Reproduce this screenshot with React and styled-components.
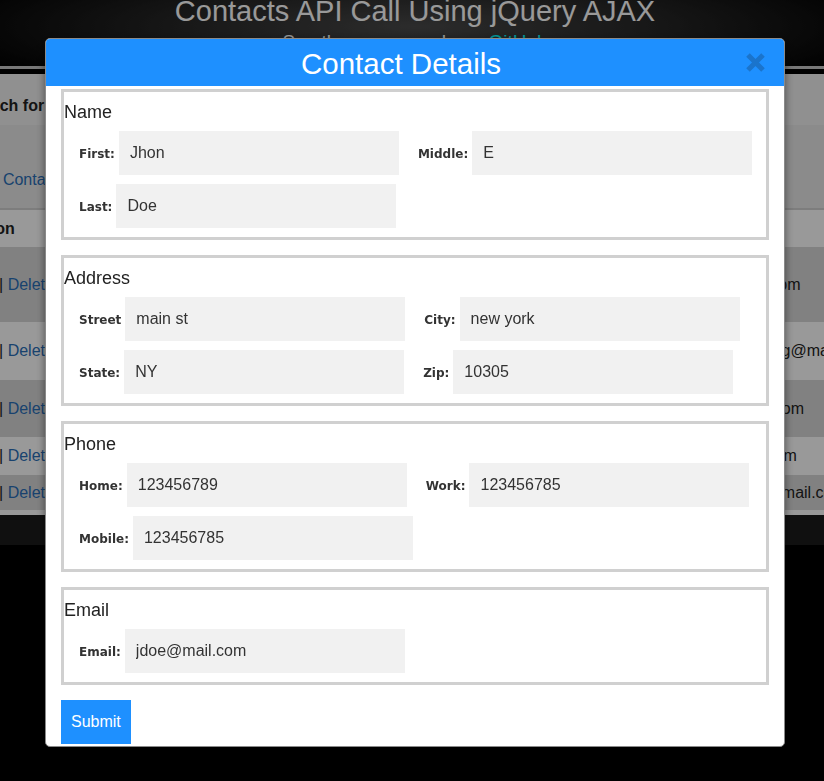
import React from 'react';
import styled, { createGlobalStyle } from 'styled-components';

const Global = createGlobalStyle`
  html, body { margin: 0; padding: 0; background: #000; overflow: hidden; }
  body { font-family: "Liberation Sans", Arial, sans-serif; }
  * { box-sizing: border-box; }
`;

/* ---------- background page ---------- */
const Page = styled.div`
  width: 830px;
  height: 781px;
  background: #000;
  overflow: hidden;
`;

const SiteHeader = styled.header`
  height: 66px;
  background: radial-gradient(ellipse 60% 120% at 50% 40%, #4a4a4a 0%, #1e1e1e 60%, #000 100%);
  text-align: center;
  color: #fff;
  overflow: hidden;
`;

const SiteTitle = styled.h1`
  margin: 0;
  font-size: 29px;
  font-weight: normal;
  line-height: 30px;
  margin-top: -4px;
`;

const SiteSub = styled.p`
  margin: 5px 0 0;
  font-size: 19px;
  line-height: 22px;
  a { color: #00ffff; text-decoration: none; }
`;

const Stripe = styled.div`
  height: 3px;
  background: #c8c8c8;
  margin-bottom: 5px;
`;

const Main = styled.main`
  width: 1000px;
  margin-left: -85px;
  background: #f0f0f0;
`;

const SearchBar = styled.div`
  height: 51px;
  padding: 23px 0 0 50px;
  font-weight: bold;
  font-size: 16px;
  color: #222;
`;

const Toolbar = styled.div`
  height: 85px;
  background: #e8e8e8;
  padding: 46px 0 0 55px;
  font-size: 16px;
  a { color: #2a6fb8; text-decoration: none; }
  border-bottom: 2px solid #d0d0d0;
`;

const Table = styled.div`
  display: flex;
  flex-direction: column;
`;

const Row = styled.div`
  display: flex;
  align-items: center;
  height: ${(p) => p.$h}px;
  background: ${(p) => (p.$dark ? '#d8d8d8' : '#ffffff')};
  font-size: 16px;
  color: #222;
  font-weight: ${(p) => (p.$head ? 'bold' : 'normal')};
`;

const ActionCell = styled.div`
  width: 775px;
  padding-left: 52px;
  white-space: nowrap;
  a { color: #2a6fb8; text-decoration: none; }
`;

const HeadCell = styled(ActionCell)`
  padding-left: 50px;
`;

const EmailCell = styled.div`
  white-space: nowrap;
`;

const Tail = styled.div`
  height: 5px;
  background: #ffffff;
`;

const SiteFooter = styled.footer`
  height: 30px;
  background: #1c1c1c;
`;

const Dim = styled.div`
  position: fixed;
  inset: 0;
  background: rgba(0, 0, 0, 0.4);
`;

/* ---------- modal ---------- */
const Modal = styled.div`
  position: fixed;
  left: 45px;
  top: 38px;
  width: 740px;
  background: #fff;
  border: 1px solid #8a8a8a;
  border-radius: 5px;
  box-shadow: 0 3px 9px rgba(0, 0, 0, 0.5);
  overflow: hidden;
`;

const ModalHeader = styled.div`
  display: flex;
  align-items: center;
  height: 47px;
  padding: 0 15px;
  background: #1e90ff;
  color: #fff;
`;

const ModalTitle = styled.h2`
  flex: 1;
  margin: 0;
  padding-top: 2px;
  text-align: center;
  font-size: 29.5px;
  font-weight: normal;
  line-height: 45px;
`;

const Close = styled.button`
  width: 28px;
  height: 28px;
  padding: 0;
  border: 0;
  background: none;
  display: flex;
  align-items: center;
  justify-content: center;
  cursor: pointer;
`;

const ModalBody = styled.form`
  padding: 3px 15px 2px;
`;

const Group = styled.fieldset`
  margin: 0 0 15px;
  padding: 0 0 9px;
  border: 3px solid #d0d0d0;
  min-width: 0;
`;

const GroupTitle = styled.h3`
  margin: 10px 0 8px;
  font-size: 18px;
  font-weight: normal;
  line-height: 21px;
  color: #222;
`;

const Fields = styled.div`
  display: flex;
  flex-wrap: wrap;
  row-gap: 9px;
`;

const Field = styled.label`
  display: flex;
  align-items: center;
  gap: 4px;
  margin-left: 15px;
  margin-right: 4px;
`;

const FieldLabel = styled.span`
  font-family: "DejaVu Sans", Verdana, sans-serif;
  font-weight: bold;
  font-size: 12px;
  color: #333;
  padding-top: 2px;
`;

const Input = styled.input`
  width: 280px;
  height: 44px;
  padding: 0 11px;
  border: 0;
  outline: none;
  background: #f1f1f1;
  font-family: "Liberation Sans", Arial, sans-serif;
  font-size: 16px;
  color: #333;
`;

const Submit = styled.button`
  height: 44px;
  padding: 0 10px;
  border: 0;
  background: #1e90ff;
  color: #fff;
  font-family: "Liberation Sans", Arial, sans-serif;
  font-size: 16px;
  cursor: pointer;
`;

const groups = [
  {
    title: 'Name',
    fields: [
      ['First:', 'Jhon'],
      ['Middle:', 'E'],
      ['Last:', 'Doe'],
    ],
  },
  {
    title: 'Address',
    fields: [
      ['Street', 'main st'],
      ['City:', 'new york'],
      ['State:', 'NY'],
      ['Zip:', '10305'],
    ],
  },
  {
    title: 'Phone',
    fields: [
      ['Home:', '123456789'],
      ['Work:', '123456785'],
      ['Mobile:', '123456785'],
    ],
  },
  {
    title: 'Email',
    fields: [['Email:', 'jdoe@mail.com']],
  },
];

const rows = [
  { h: 75, dark: true, email: 'jdoe@mail.com' },
  { h: 58, dark: false, email: 'thomas.young@mail.com' },
  { h: 57, dark: true, email: 'mike@mail.com' },
  { h: 38, dark: false, email: 'bob@mail.com' },
  { h: 35, dark: true, email: 'alice.smith@mail.com' },
];

export default function App() {
  return (
    <>
      <Global />
      <Page>
        <SiteHeader>
          <SiteTitle>Contacts API Call Using jQuery AJAX</SiteTitle>
          <SiteSub>
            See the source code on <a href="#">GitHub</a>
          </SiteSub>
        </SiteHeader>
        <Stripe />
        <Main>
          <SearchBar>Search for contact:</SearchBar>
          <Toolbar>
            <a href="#">Add Contact</a>
          </Toolbar>
          <Table>
            <Row $h={37} $head>
              <HeadCell>Action</HeadCell>
              <EmailCell>Email</EmailCell>
            </Row>
            {rows.map((r, i) => (
              <Row key={i} $h={r.h} $dark={r.dark}>
                <ActionCell>
                  <a href="#">Edit</a> | <a href="#">Delete</a>
                </ActionCell>
                <EmailCell>{r.email}</EmailCell>
              </Row>
            ))}
          </Table>
          <Tail />
        </Main>
        <SiteFooter />
      </Page>
      <Dim />
      <Modal>
        <ModalHeader>
          <ModalTitle>Contact Details</ModalTitle>
          <Close type="button" aria-label="Close">
            <svg width="21" height="21" viewBox="0 0 21 21">
              <path d="M3 3 L18 18 M18 3 L3 18" stroke="#1a74cc" strokeWidth="5" />
            </svg>
          </Close>
        </ModalHeader>
        <ModalBody onSubmit={(e) => e.preventDefault()}>
          {groups.map((g) => (
            <Group key={g.title}>
              <GroupTitle>{g.title}</GroupTitle>
              <Fields>
                {g.fields.map(([label, value]) => (
                  <Field key={label}>
                    <FieldLabel>{label}</FieldLabel>
                    <Input defaultValue={value} />
                  </Field>
                ))}
              </Fields>
            </Group>
          ))}
          <Submit type="submit">Submit</Submit>
        </ModalBody>
      </Modal>
    </>
  );
}
